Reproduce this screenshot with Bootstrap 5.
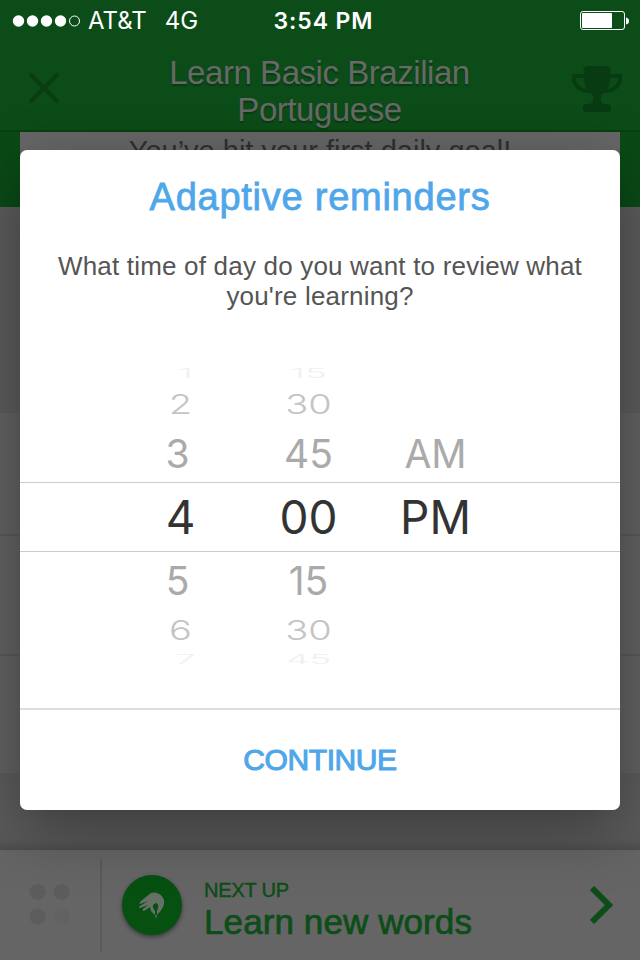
<!DOCTYPE html>
<html lang="en">
<head>
<meta charset="utf-8">
<meta name="viewport" content="width=device-width, initial-scale=1">
<title>Adaptive reminders</title>
<link href="https://cdn.jsdelivr.net/npm/bootstrap@5.3.0/dist/css/bootstrap.min.css" rel="stylesheet">
<style>
html,body{height:960px;overflow:hidden}
body{font-family:"Liberation Sans",Arial,sans-serif;background:#606060;color:#666}
.screen{width:640px;height:960px;overflow:hidden}
.top-area{height:132px;background:#0c4c18;border-bottom:2px solid #09400f}
.status-line{height:42px;font-family:Inter,sans-serif;font-size:24px;line-height:42px}
.status-line>div{flex:1 1 0}
.carrier{padding-left:12px;white-space:nowrap}
.carrier .net{margin-left:6px}
.carrier .band{margin-left:18px}
.clock{font-weight:600;font-size:23px;letter-spacing:.9px;padding-left:3px}
.title-row{height:88px;padding:0 18px 0 28px}
.course{font-size:33px;line-height:37px;text-shadow:0 2px 1px #083c11;padding-top:12px;width:340px;color:#686868;letter-spacing:-.45px;margin-left:7px}
.goal-zone{height:75px;background:#0a4a16;padding:0 20px}
.goal-card{height:75px;background:#666;color:#303030;font-size:29px;line-height:35px;text-align:center;padding-top:2px}
.page-rows{height:643px}
.r1{height:206px;background:#5c5c5c}
.r2{height:123px;background:#626262;border-bottom:2px solid #595959}
.r3{height:120px;background:#626262;border-bottom:2px solid #595959}
.r4{height:117px;background:#626262}
.r5{height:77px;background:linear-gradient(#5c5c5c 50px,#595959 67px,#4d4d4d)}
.next-bar{height:110px;background:#656565}
.handle{width:100px;height:92px;padding:24px 0 0 28px}
.rule{width:2px;height:93px;background:#5a5a5a}
.next-icon{width:60px;height:60px;background:#065012;box-shadow:0 2px 4px rgba(0,0,0,.45);margin-left:20px}
.next-text{color:#0c4d18;margin-left:22px;padding-top:8px}
.next-text .top-label{font-size:20px;line-height:24px;-webkit-text-stroke:.4px;letter-spacing:-.2px}
.next-text .main-label{font-size:35px;line-height:38px;-webkit-text-stroke:.7px;margin-top:1px;letter-spacing:.1px}
.veil{position:absolute;left:0;top:0;width:640px;height:960px;padding:150px 20px;overflow:hidden}
.sheet{height:660px;background:#fff;border-radius:7px;box-shadow:0 20px 60px rgba(0,0,0,.36)}
.sheet-title{height:95px;padding-top:24px;color:#4fa7ea;font-size:38px;line-height:46px;-webkit-text-stroke:.8px;letter-spacing:.75px}
.question{color:#555;font-size:26px;line-height:30px;height:120px;padding-top:6px;letter-spacing:.19px}
.wheel{height:303px;font-family:Inter,sans-serif;color:#aaa}
.wheel-row{display:grid;grid-template-columns:106px 109px 147px 107px;white-space:nowrap}
.wheel-row span{justify-self:center;align-self:center;line-height:1;text-align:center}
.wheel-row span:nth-child(1){grid-column:2}
.w1{height:18px}.w2{height:42px}.w3{height:57px}.w4{height:70px;border-top:1px solid #ccc;border-bottom:1px solid #ccc;color:#333;font-size:46px}
.w5{height:56px}.w6{height:44px}.w7{height:16px}
.w3,.w5{font-size:39px}.w2,.w6{font-size:38px;color:#c4c4c4}.w1,.w7{font-size:37px;color:#f0f0f0}
.w2 span,.w6 span{transform:scaleY(.72)}
.wheel-row.w1 span,.wheel-row.w7 span{transform:scaleY(.34);line-height:16px}
.w2,.w6,.w1,.w7{font-weight:300}
.w3 span:first-child,.w5 span:first-child{margin-right:6px}
.w1 span:first-child,.w7 span:first-child{margin-left:10px}
.go{height:102px;margin-top:40px;border-top:2px solid #ddd;color:#4fa7ea;font-size:30px;line-height:100px;-webkit-text-stroke:1.1px;letter-spacing:-.4px}
</style>
<script src="https://cdn.jsdelivr.net/npm/bootstrap@5.3.0/dist/js/bootstrap.bundle.min.js"></script>
</head>
<body>
<div class="screen position-relative">
  <header class="top-area">
    <div class="status-line d-flex text-white">
      <div class="carrier d-flex align-items-center">
        <svg width="70" height="14" viewBox="0 0 70 14" fill="#fff"><circle cx="6.5" cy="7" r="5.7"/><circle cx="20.5" cy="7" r="5.7"/><circle cx="34.5" cy="7" r="5.7"/><circle cx="48.5" cy="7" r="5.7"/><circle cx="62.5" cy="7" r="5" fill="none" stroke="#fff"/></svg>
        <span class="net">AT&amp;T</span><span class="band">4G</span>
      </div>
      <div class="clock text-center">3:54 PM</div>
      <div class="d-flex justify-content-end align-items-center pe-2">
        <svg width="52" height="20" viewBox="0 0 52 20"><rect x=".5" y=".5" width="44" height="18" rx="2.5" fill="none" stroke="#fff"/><rect x="2" y="2" width="30" height="15" rx="1" fill="#fff"/><path d="M46 6.500q3 .5 3 3.500t-3 3.500z" fill="#fff"/></svg>
      </div>
    </div>
    <div class="title-row d-flex justify-content-between">
      <svg class="mt-4" width="32" height="44" viewBox="0 0 32 44"><path d="M2 8l28 28M30 8L2 36" stroke="#093c13" stroke-width="4" fill="none"/></svg>
      <div class="course text-center">Learn Basic Brazilian Portuguese</div>
      <svg class="mt-4" width="50" height="48" viewBox="0 0 50 48"><path fill="#083b11" d="M16 0h18q4.500 0 4.500 4.500L38 14q-.5 7-4 11-4 3-5 5v4q0 3 4 4c5 0 6 1 6 5 0 2-1 3-2 3H13c-1 0-2-1-2-3 0-4 1-5 6-5q4-1 4-4v-4q-1-2-5-5-3.500-4-4-11l-.5-9.500Q11.500 0 16 0z"/><path d="M13 10H2c-1 9 6 15 15 15M37 10h11c1 9-6 15-15 15" fill="none" stroke="#083b11" stroke-width="4"/></svg>
    </div>
  </header>
  <section class="goal-zone"><div class="goal-card">You’ve hit your first daily goal!</div></section>
  <section class="page-rows"><div class="r1"></div><div class="r2"></div><div class="r3"></div><div class="r4"></div><div class="r5"></div></section>
  <footer class="next-bar d-flex align-items-center">
    <div class="handle"><svg width="42" height="42" viewBox="0 0 42 42" fill="#5d5d5d"><circle cx="9.500" cy="9" r="8"/><circle cx="33.500" cy="9" r="8"/><circle cx="9.500" cy="33.500" r="8"/><circle cx="33.500" cy="33.500" r="8" opacity=".3"/></svg></div>
    <div class="rule"></div>
    <div class="next-icon rounded-circle d-flex align-items-center justify-content-center">
      <svg width="26" height="27" viewBox="0 0 26 27"><path fill="#667066" d="M12 1c5-2 11 1 13 7 1 7-4 12-7 15l-1 4-1-4c-3-2-5-5-5-8l-6 4q-2 0-1-2l5-4-8 3q-2-1 0-2l8-5-8 3q-1-1 1-3z"/><path fill="#065012" d="M17 11q3 1 2 5l-1 3v4h-2v-4q-5-6 1-8z"/></svg>
    </div>
    <div class="next-text"><div class="top-label">NEXT UP</div><div class="main-label">Learn new words</div></div>
    <svg class="ms-auto me-4" width="26" height="40" viewBox="0 0 26 40"><path d="M2 3l17 17L2 37" fill="none" stroke="#0c4d18" stroke-width="6"/></svg>
  </footer>
  <div class="veil">
    <main class="sheet">
      <h1 class="sheet-title text-center mb-0 fw-normal">Adaptive reminders</h1>
      <p class="question text-center mb-0">What time of day do you want to review what<br>you're learning?</p>
      <div class="wheel">
        <div class="wheel-row w1"><span>1</span><span>15</span></div>
        <div class="wheel-row w2"><span>2</span><span>30</span></div>
        <div class="wheel-row w3"><span>3</span><span>45</span><span>AM</span></div>
        <div class="wheel-row w4"><span>4</span><span>00</span><span>PM</span></div>
        <div class="wheel-row w5"><span>5</span><span>15</span></div>
        <div class="wheel-row w6"><span>6</span><span>30</span></div>
        <div class="wheel-row w7"><span>7</span><span>45</span></div>
      </div>
      <div class="go text-center">CONTINUE</div>
    </main>
  </div>
</div>
</body>
</html>
